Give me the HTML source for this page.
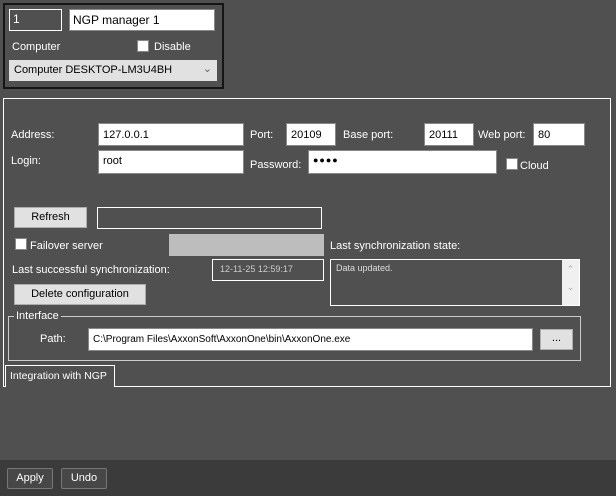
<!DOCTYPE html>
<html><head><style>
*{box-sizing:border-box;margin:0;padding:0}
body{width:616px;height:496px;background:#505050;font-family:"Liberation Sans",sans-serif;font-size:11px;color:#fff;position:relative;overflow:hidden}
.a{position:absolute;white-space:nowrap}
.w{background:#fff;color:#000;border:1px solid #888;padding:0 4px;display:flex;align-items:center}
.d{border:1px solid #fff;background:#505050}
.b{background:#e1e1e1;color:#000;border:1px solid #adadad;text-align:center;line-height:19px}
.cb{background:#fff;width:12px;height:12px;border:1px solid #888}
.l{line-height:14px}
</style></head><body>
<div class="a" style="left:3px;top:3px;width:221px;height:86px;border:2px solid #151515"></div>
<div class="a d" style="left:9px;top:9px;width:53px;height:22px;padding:2px 3px;font-size:12px">1</div>
<div class="a w" style="left:69px;top:9px;width:146px;height:22px;font-size:12px;padding:0 3px">NGP manager 1</div>
<div class="a l" style="left:12px;top:40px">Computer</div>
<div class="a cb" style="left:137px;top:40px"></div>
<div class="a l" style="left:154px;top:40px">Disable</div>
<div class="a" style="left:9px;top:60px;width:208px;height:21px;background:#e1e1e1;color:#000;padding:4px 5px;font-size:11px">Computer DESKTOP-LM3U4BH<span style="position:absolute;right:5px;top:2px;color:#666">⌄</span></div>

<div class="a" style="left:3px;top:98px;width:608px;height:289px;border:1px solid #fff"></div>
<div class="a l" style="left:11px;top:128px">Address:</div>
<div class="a w" style="left:98px;top:123px;width:146px;height:23px">127.0.0.1</div>
<div class="a l" style="left:250px;top:128px">Port:</div>
<div class="a w" style="left:286px;top:123px;width:50px;height:23px">20109</div>
<div class="a l" style="left:343px;top:128px">Base port:</div>
<div class="a w" style="left:424px;top:123px;width:50px;height:23px">20111</div>
<div class="a l" style="left:478px;top:128px">Web port:</div>
<div class="a w" style="left:533px;top:123px;width:52px;height:23px">80</div>
<div class="a l" style="left:11px;top:154px">Login:</div>
<div class="a w" style="left:98px;top:150px;width:146px;height:24px;align-items:flex-start;padding-top:4px">root</div>
<div class="a l" style="left:250px;top:158px">Password:</div>
<div class="a w" style="left:308px;top:150px;width:189px;height:24px;font-size:9px;letter-spacing:1px;align-items:flex-start;padding-top:4px">●●●●</div>
<div class="a cb" style="left:506px;top:158px"></div>
<div class="a l" style="left:520px;top:159px">Cloud</div>

<div class="a b" style="left:14px;top:207px;width:73px;height:21px">Refresh</div>
<div class="a d" style="left:97px;top:207px;width:225px;height:22px"></div>
<div class="a cb" style="left:15px;top:238px"></div>
<div class="a l" style="left:30px;top:239px">Failover server</div>
<div class="a" style="left:169px;top:234px;width:155px;height:22px;background:#bdbdbd"></div>
<div class="a l" style="left:330px;top:239px">Last synchronization state:</div>
<div class="a l" style="left:12px;top:263px">Last successful synchronization:</div>
<div class="a d" style="left:212px;top:259px;width:112px;height:22px;color:#ccc;font-size:9px;padding:4px 7px">12-11-25 12:59:17</div>
<div class="a d" style="left:330px;top:259px;width:250px;height:47px;font-size:9px;color:#ddd;padding:3px 5px">Data updated.<div class="a" style="right:0;top:0;width:17px;height:45px;background:#f0f0f0;color:#aaa;font-size:9px;text-align:center;line-height:18px">⌃<br>⌄</div></div>
<div class="a b" style="left:14px;top:284px;width:132px;height:21px">Delete configuration</div>

<div class="a" style="left:8px;top:316px;width:573px;height:45px;border:1px solid #ccc"></div>
<div class="a l" style="left:14px;top:309px;background:#505050;padding:0 2px">Interface</div>
<div class="a l" style="left:40px;top:332px">Path:</div>
<div class="a w" style="left:88px;top:328px;width:445px;height:23px;font-size:10px">C:\Program Files\AxxonSoft\AxxonOne\bin\AxxonOne.exe</div>
<div class="a b" style="left:540px;top:329px;width:33px;height:21px;line-height:17px">...</div>

<div class="a" style="left:5px;top:365px;width:110px;height:22px;border:1px solid #fff;border-bottom:none;background:#505050;padding:4px 4px;font-size:10.5px">Integration with NGP</div>

<div class="a" style="left:0;top:460px;width:616px;height:36px;background:#3b3b3b"></div>
<div class="a" style="left:7px;top:468px;width:46px;height:21px;border:1px solid #777;background:#474747;border-radius:2px;text-align:center;line-height:19px">Apply</div>
<div class="a" style="left:61px;top:468px;width:46px;height:21px;border:1px solid #777;background:#474747;border-radius:2px;text-align:center;line-height:19px">Undo</div>
</body></html>
